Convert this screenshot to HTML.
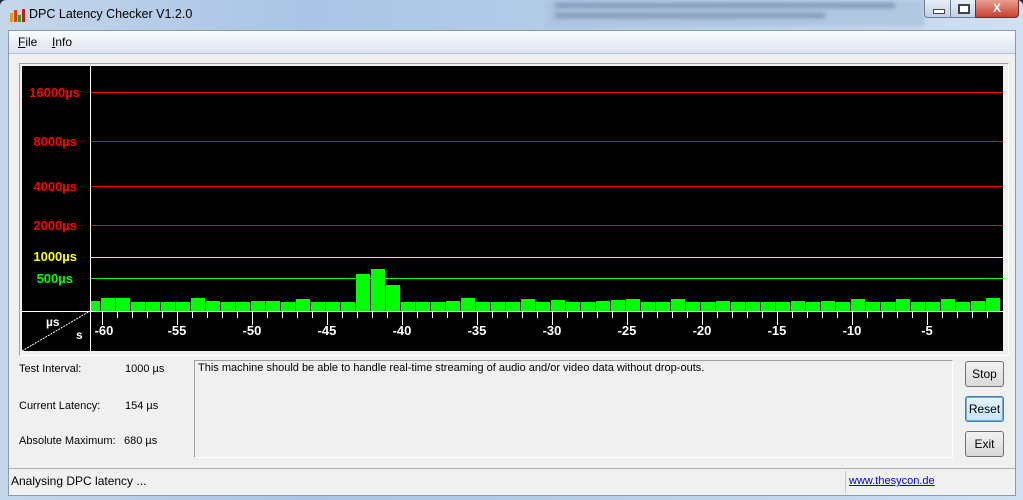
<!DOCTYPE html>
<html><head><meta charset="utf-8"><style>
body{margin:0;width:1023px;height:500px;overflow:hidden;background:#1e2a38;font-family:"Liberation Sans",sans-serif;}
.win{position:absolute;left:0;top:0;width:1023px;height:500px;border-radius:6px 6px 0 0;background:linear-gradient(90deg,#c4d6ea 0%,#a9c4e6 30%,#b4cde8 55%,#cfe0f2 100%);}
.title{position:absolute;left:29px;top:7px;font-size:12.5px;color:#000;}
.client{position:absolute;left:8px;top:30px;width:1006px;height:464px;background:#f0f0f0;border:1px solid #8a9bb0;}
.menu{position:absolute;left:0;top:0;width:1006px;height:22px;background:linear-gradient(#fbfcfe,#dce4f0);border-bottom:1px solid #b8c4d4;font-size:12px;}
.menu span{position:absolute;top:4px;}
.lbl{position:absolute;font-size:11px;color:#000;}
.btn{position:absolute;left:956px;width:37px;height:24px;border:1px solid #707070;border-radius:3px;background:linear-gradient(#f2f2f2,#e6e6e6 50%,#d8d8d8);font-size:12px;text-align:center;line-height:24px;}
</style></head><body>
<div class="win">
<div style="position:absolute;left:545px;top:0;width:380px;height:27px;background:#a8c0dc;opacity:.7;filter:blur(2px)"></div>
<div style="position:absolute;left:555px;top:3px;width:340px;height:5px;background:#8098b8;filter:blur(2px)"></div>
<div style="position:absolute;left:555px;top:13px;width:270px;height:5px;background:#8098b8;filter:blur(2px)"></div>
<svg style="position:absolute;left:9px;top:7px" width="16" height="16"><rect x="1" y="6" width="3" height="9" fill="#d8a020"/><rect x="5" y="3" width="3" height="12" fill="#e04010"/><rect x="9" y="8" width="3" height="7" fill="#30a030"/><rect x="13" y="2" width="3" height="13" fill="#c02020"/></svg>
<div class="title">DPC Latency Checker V1.2.0</div>
<div style="position:absolute;left:924px;top:0;width:26px;height:17px;border:1px solid #6b7d95;border-top:none;border-radius:0 0 0 4px;background:linear-gradient(#e8eef6,#c2d0e2)"><div style="position:absolute;left:8px;top:9px;width:10px;height:3px;border:1px solid #444;background:#fff"></div></div>
<div style="position:absolute;left:950px;top:0;width:24px;height:17px;border:1px solid #6b7d95;border-top:none;background:linear-gradient(#e8eef6,#c2d0e2)"><div style="position:absolute;left:7px;top:4px;width:8px;height:6px;border:2px solid #444;background:#fff"></div></div>
<div style="position:absolute;left:975px;top:0;width:42px;height:17px;border:1px solid #6b3030;border-top:none;border-radius:0 0 4px 0;background:linear-gradient(#e8a090,#c84030);color:#fff;font-weight:bold;font-size:12px;text-align:center;line-height:16px">X</div>
<div class="client">
<div class="menu"><span style="left:9px"><u>F</u>ile</span><span style="left:43px"><u>I</u>nfo</span></div>
<div style="position:absolute;left:10px;top:32px;width:988px;height:291px;border:1px solid #a0a0a0;border-right-color:#fff;border-bottom-color:#fff"></div>
<div style="position:absolute;left:0;top:437px;width:1006px;height:1px;background:#b0b0b0"></div>
<div style="position:absolute;left:836px;top:440px;width:1px;height:22px;background:#c8c8c8"></div>
<div class="lbl" style="left:2px;top:443px;font-size:12px">Analysing DPC latency ...</div>
<div class="lbl" style="left:840px;top:444px;color:#0000e0;text-decoration:underline">www.thesycon.de</div>
<div class="lbl" style="left:10px;top:332px">Test Interval:</div>
<div class="lbl" style="left:116px;top:332px">1000 µs</div>
<div class="lbl" style="left:10px;top:369px">Current Latency:</div>
<div class="lbl" style="left:116px;top:369px">154 µs</div>
<div class="lbl" style="left:10px;top:404px">Absolute Maximum:</div>
<div class="lbl" style="left:115px;top:404px">680 µs</div>
<div style="position:absolute;left:185px;top:329px;width:757px;height:96px;border:1px solid #a0a0a0;border-right-color:#fff;border-bottom-color:#fff"></div>
<div class="lbl" style="left:189px;top:331px">This machine should be able to handle real-time streaming of audio and/or video data without drop-outs.</div>
<div class="btn" style="top:330px">Stop</div>
<div class="btn" style="top:365px;border-color:#3c7fb1;background:linear-gradient(#e5f4fc,#c4e5f6);box-shadow:inset 0 0 0 1px #7ad">Reset</div>
<div class="btn" style="top:400px">Exit</div>
</div>
<svg id="ch" style="position:absolute;left:22px;top:66px" width="981" height="285" font-family="Liberation Sans,sans-serif" font-weight="bold">
<rect width="981" height="285" fill="#000"/>
<line x1="68" y1="26.5" x2="981" y2="26.5" stroke="#f00"/>
<line x1="68" y1="75.5" x2="981" y2="75.5" stroke="#f00"/>
<line x1="68" y1="120.5" x2="981" y2="120.5" stroke="#f00"/>
<line x1="68" y1="159.5" x2="981" y2="159.5" stroke="#f00"/>
<rect x="68" y="191" width="913" height="1" fill="#ff0"/>
<line x1="68" y1="212.5" x2="981" y2="212.5" stroke="#0f0"/>
<g font-size="13" text-anchor="end" fill="#f00">
<text x="58" y="31">16000µs</text><text x="55" y="80">8000µs</text><text x="55" y="125">4000µs</text><text x="55" y="164">2000µs</text>
<text x="55" y="195" fill="#ff0">1000µs</text><text x="51" y="217" fill="#0f0">500µs</text></g>
<g id="bars" fill="#0f0"></g>
<line x1="68.5" y1="0" x2="68.5" y2="285" stroke="#fff"/>
<line x1="0" y1="245.5" x2="981" y2="245.5" stroke="#fff"/>
<line x1="0" y1="285" x2="68" y2="245" stroke="#fff" stroke-dasharray="2 1"/>
<text x="24" y="260" font-size="12" fill="#fff">µs</text><text x="54" y="273" font-size="12" fill="#fff">s</text>
<g id="ticks" stroke="#fff"></g>
<g font-size="13" fill="#fff" text-anchor="middle">
<text x="82" y="269">-60</text><text x="155" y="269">-55</text><text x="230" y="269">-50</text><text x="305" y="269">-45</text><text x="380" y="269">-40</text><text x="455" y="269">-35</text><text x="530" y="269">-30</text><text x="605" y="269">-25</text><text x="680" y="269">-20</text><text x="755" y="269">-15</text><text x="830" y="269">-10</text><text x="905" y="269">-5</text></g>
</svg>
</div>
<script>
var h=[10,13,13,9,9,9,9,13,10,9,9,10,10,9,12,9,9,9,37,42,26,9,9,9,10,13,9,9,9,12,9,11,9,9,10,11,12,9,9,12,9,9,10,9,9,9,9,10,9,10,9,12,9,9,12,9,9,12,9,10,13];
var b='',t='';
for(var k=0;k<61;k++){var x0=68+(k==0?1:15*k-4),x1=68+15*k+11;if(x1>981)x1=981;b+='<rect x="'+x0+'" y="'+(245-h[k])+'" width="'+(x1-x0-1)+'" height="'+h[k]+'"/>';}
for(var n=0;n<60;n++){var x=80.5+15*n;t+='<line x1="'+x+'" y1="246" x2="'+x+'" y2="'+(n%5==0?259:252)+'"/>';}
document.getElementById('bars').innerHTML=b;document.getElementById('ticks').innerHTML=t;
</script>
</body></html>
